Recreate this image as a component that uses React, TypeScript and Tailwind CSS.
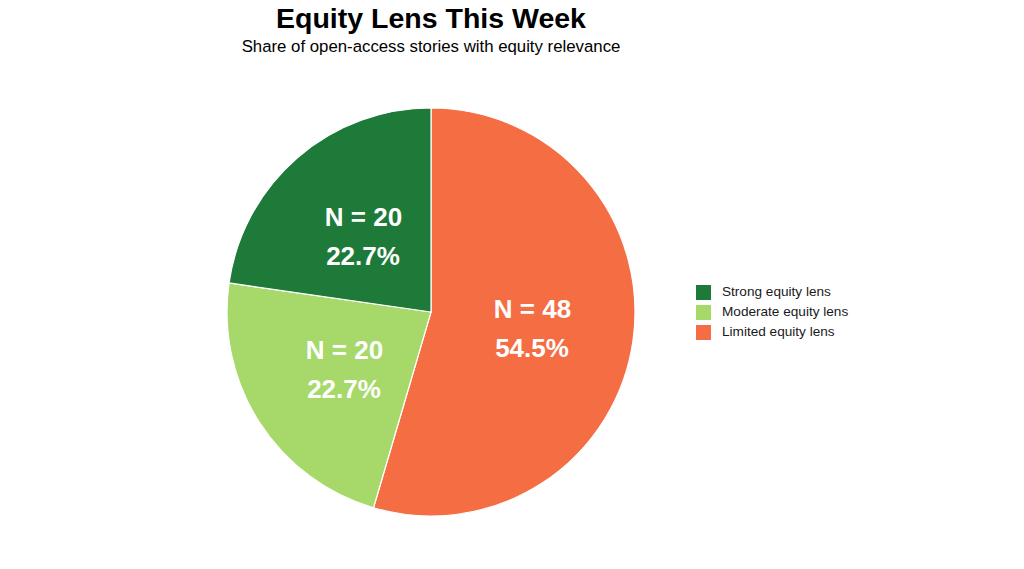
import React from "react";

const cx = 431;
const cy = 252;
const r = 204;

function pt(deg: number) {
  const a = (deg * Math.PI) / 180;
  return [cx + r * Math.sin(a), cy - r * Math.cos(a)];
}

function slice(a0: number, a1: number) {
  const [x0, y0] = pt(a0);
  const [x1, y1] = pt(a1);
  const large = a1 - a0 > 180 ? 1 : 0;
  return `M ${cx} ${cy} L ${x0} ${y0} A ${r} ${r} 0 ${large} 1 ${x1} ${y1} Z`;
}

const total = 88;
const a1 = (48 / total) * 360;
const a2 = a1 + (20 / total) * 360;

const legend = [
  { label: "Strong equity lens", color: "bg-[#1e7a39]" },
  { label: "Moderate equity lens", color: "bg-[#a6d96a]" },
  { label: "Limited equity lens", color: "bg-[#f46d43]" },
];

export default function App() {
  return (
    <div
      className="w-[1024px] h-[569px] bg-white overflow-hidden"
      style={{ fontFamily: '"Liberation Sans", Arial, sans-serif' }}
    >
      <div className="w-[862px] h-[60px] flex flex-col items-center">
        <div className="pt-[2px] text-[28.5px] leading-[32px] font-bold text-black">
          Equity Lens This Week
        </div>
        <div className="mt-[3px] text-[16.8px] leading-[20px] text-black">
          Share of open-access stories with equity relevance
        </div>
      </div>
      <div className="flex">
        <svg width="680" height="509" viewBox="0 0 680 509" className="shrink-0">
          <path d={slice(0, a1)} fill="#f46d43" stroke="#ffffff" strokeWidth="1.2" />
          <path d={slice(a1, a2)} fill="#a6d96a" stroke="#ffffff" strokeWidth="1.2" />
          <path d={slice(a2, 360)} fill="#1e7a39" stroke="#ffffff" strokeWidth="1.2" />
          <g
            fill="#ffffff"
            fontWeight="bold"
            fontSize="26"
            textAnchor="middle"
            fontFamily='"Liberation Sans", Arial, sans-serif'
          >
            <text x="532.5" y="258.3">N = 48</text>
            <text x="532" y="297.3">54.5%</text>
            <text x="363.5" y="166.3">N = 20</text>
            <text x="363" y="205.3">22.7%</text>
            <text x="344.5" y="299">N = 20</text>
            <text x="344" y="338">22.7%</text>
          </g>
        </svg>
        <div className="ml-[16px] mt-[222px] flex flex-col">
          {legend.map((l) => (
            <div key={l.label} className="h-[20px] flex items-center">
              <div className={`w-[15px] h-[15px] ${l.color}`} />
              <span className="ml-[11px] text-[13.6px] text-[#1a1a1a]">{l.label}</span>
            </div>
          ))}
        </div>
      </div>
    </div>
  );
}
